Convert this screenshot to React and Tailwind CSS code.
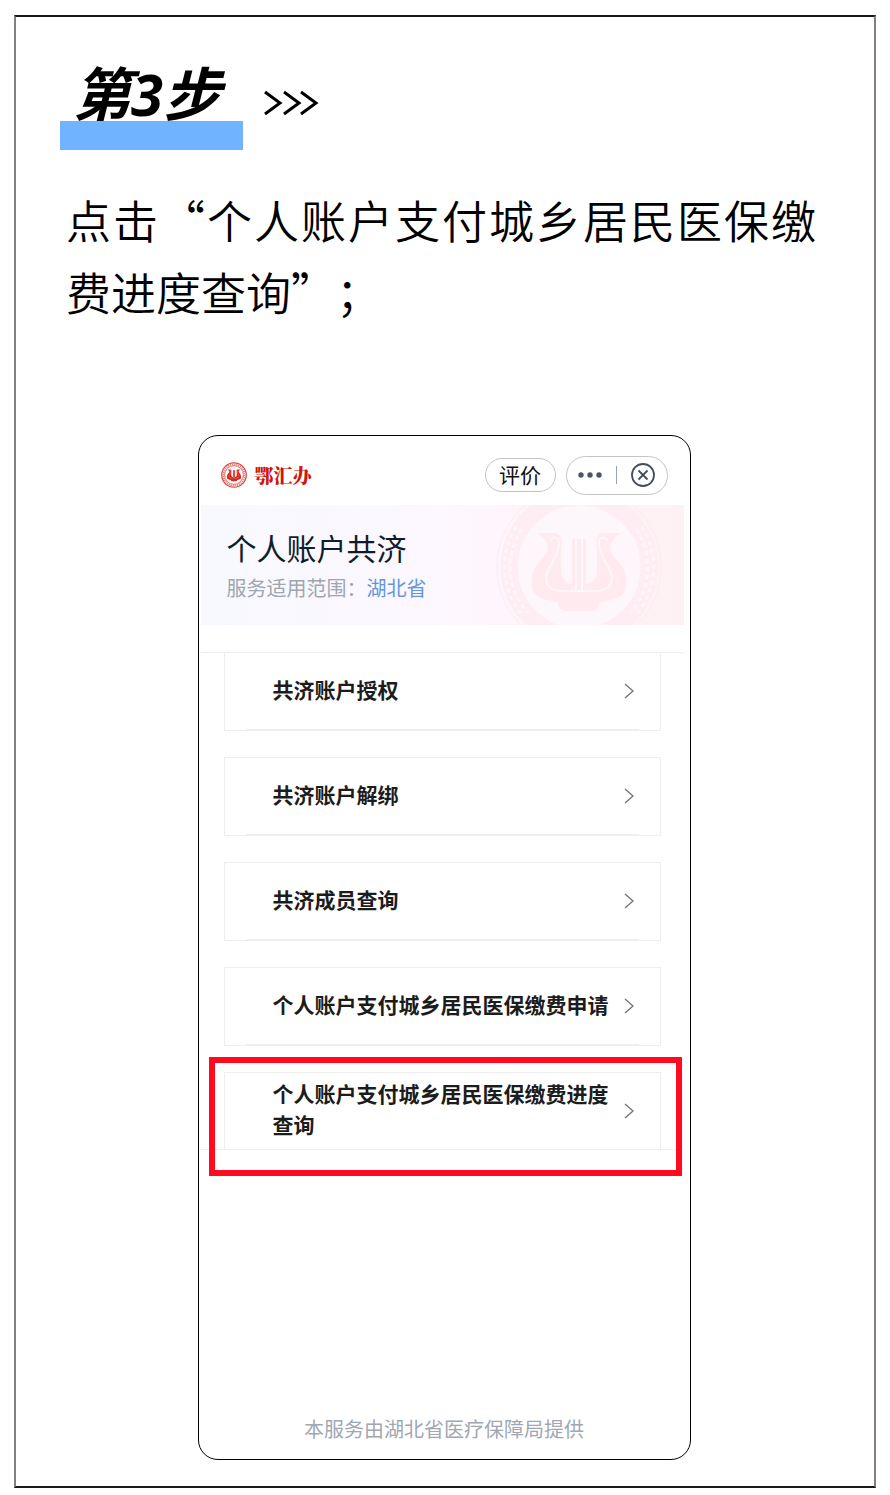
import React from "react";

const services = [
  { id: 1, name: "共济账户授权" },
  { id: 2, name: "共济账户解绑" },
  { id: 3, name: "共济成员查询" },
  { id: 4, name: "个人账户支付城乡居民医保缴费申请" },
  { id: 5, name: "个人账户支付城乡居民医保缴费进度查询", active: true },
];

// Lyre made of two birds facing outwards, drawn on a 100 x 100 box
const Lyre = ({ color, gap }) => (
  <>
    <path
      fill={color}
      d="M8 11 L27 11 C33 13 34 19 32 26 L32 50 C33 58 38 62 43 62 L43 17 L57 17 L57 62 C62 62 67 58 68 50 L68 26 C66 19 67 13 73 11 L92 11 C87 15 82 19 81 25 C81 36 96 40 97 56 C98 67 95 74 88 76 C82 79 76 78 71 81 C70 87 67 89 63 89 L37 89 C33 89 30 87 29 81 C24 78 18 79 12 76 C5 74 2 67 3 56 C4 40 19 36 19 25 C18 19 13 15 8 11 Z"
    />
    <path
      fill="none"
      stroke={gap}
      strokeWidth="2"
      d="M22 19 C22 14 30 14 30 21 C30 36 18 44 17 56 C17 66 26 69 34 69 L66 69 C74 69 83 66 83 56 C82 44 70 36 70 21 C70 14 78 14 78 19 M47 17 L47 69 M53 17 L53 69"
    />
  </>
);

const Logo = () => (
  <svg viewBox="0 0 100 100" className="size-[26px]" aria-hidden="true">
    <circle cx="50" cy="50" r="47" fill="none" stroke="#dc4a40" strokeWidth="5" />
    <circle cx="50" cy="50" r="41" fill="none" stroke="#e88a84" strokeWidth="7" strokeDasharray="5 3" />
    <circle cx="50" cy="50" r="36" fill="none" stroke="#dc4a40" strokeWidth="3" />
    <g transform="translate(21 22) scale(0.58)">
      <Lyre color="#d5271e" gap="#f2aaa5" />
    </g>
  </svg>
);

const Watermark = () => (
  <svg viewBox="0 0 166 120" className="absolute top-0 right-[22px] h-full" fill="none" aria-hidden="true">
    <circle cx="83" cy="62" r="82" stroke="#fdecf1" strokeWidth="1" />
    <circle cx="83" cy="62" r="62" fill="#fdf6fb" />
    <circle cx="83" cy="62" r="70" stroke="#feedf2" strokeWidth="17" />
    {/* Laurel leaves on both sides of the ring */}
    <path d="M26 24 A68 68 0 0 0 32 108 M140 24 A68 68 0 0 1 134 108" stroke="#fff6fa" strokeWidth="3" strokeDasharray="5 3" />
    <path d="M20 22 A74 74 0 0 0 26 110 M146 22 A74 74 0 0 1 140 110" stroke="#fff6fa" strokeWidth="3" strokeDasharray="4 4" />
    <g transform="translate(33 17)">
      <Lyre color="#ffebef" gap="#fdf6fb" />
    </g>
  </svg>
);

const Chevron = () => (
  <svg viewBox="0 0 10 16" className="h-4 w-[10px] shrink-0" fill="none" stroke="#777" strokeWidth="1.5" aria-hidden="true">
    <path d="M1 1 L9 8 L1 15" />
  </svg>
);

const Phone = () => (
  <section className="mx-auto w-full max-w-[493px] rounded-[20px] border border-black bg-white pt-5 pb-[15px]">
    <header className="flex h-[38px] items-center px-[22px]">
      <Logo />
      <span className="ml-2 flex-1 font-['Noto_Serif_CJK_SC','Noto_Sans_CJK_SC',serif] text-[19px] leading-6 font-black text-[#d0140f]">
        鄂汇办
      </span>
      <button className="h-[34px] w-[71px] rounded-full border border-[#c4c4c4] pb-[2px] text-[21px] leading-[30px] text-[#111]">
        评价
      </button>
      <div className="ml-[10px] flex h-[39px] w-[102px] items-center justify-between rounded-full border border-[#c4c4c4] pr-3 pl-[11px]">
        <button aria-label="更多">
          <svg viewBox="0 0 24 6" className="h-[6px] w-6" fill="#4b5566">
            <circle cx="3" cy="3" r="2.7" />
            <circle cx="12" cy="3" r="2.7" />
            <circle cx="21" cy="3" r="2.7" />
          </svg>
        </button>
        <span className="h-[18px] w-px bg-[#9aa5b1]" />
        <button aria-label="关闭">
          <svg viewBox="0 0 24 24" className="size-6" fill="none" stroke="#434d5e" strokeWidth="1.8">
            <circle cx="12" cy="12" r="11" />
            <path d="M7.5 7.5 L16.5 16.5 M16.5 7.5 L7.5 16.5" />
          </svg>
        </button>
      </div>
    </header>

    {/* Banner */}
    <div className="relative mt-[11px] mr-[6px] ml-[2px] h-[120px] overflow-hidden bg-linear-to-r from-[#f7f9ff] via-[#fdf7fe] to-[#fff1f3] pt-5 pl-[26px]">
      <Watermark />
      <h2 className="relative text-[30px] leading-[44px] text-[#101c2c]">个人账户共济</h2>
      <p className="relative text-[20px] leading-[38px] text-[#a0a5b0]">
        服务适用范围：
        <a href="#hubei" className="text-[#6496dc]">湖北省</a>
      </p>
    </div>

    {/* Service list */}
    <ul className="mt-[27px] mr-[6px] ml-[2px] flex flex-col gap-[26px] border-y border-[#f0f0f0] px-[23px]">
      {services.map((item) => (
        <li
          key={item.id}
          className="relative border border-[#eee] first:border-t-0 last:border-b-0"
        >
          <a
            href={`#service-${item.id}`}
            className="flex h-[76px] items-center justify-between pr-[26px] pl-12 text-[21px] leading-[31px] font-bold text-[#1c1c1c]"
          >
            <span className="w-[338px] pb-1">{item.name}</span>
            <Chevron />
          </a>
          {!item.active && <div className="mx-[21px] h-px bg-[#eee]" />}
          {item.active && (
            <div className="pointer-events-none absolute -top-4 -right-[22px] -bottom-[27px] -left-4 border-6 border-[#ff0a20]" />
          )}
        </li>
      ))}
    </ul>

    <p className="mt-[264px] text-center text-[20px] leading-[30px] text-[#a0a7b3]">
      本服务由湖北省医疗保障局提供
    </p>
  </section>
);

const App = () => {
  return (
    <div lang="zh-CN" className="bg-white px-[14px] pt-[15px] pb-2 font-['Noto_Sans_CJK_SC',sans-serif] text-black">
      <main className="border-2 border-x-[#808080] border-y-[#1a1a1a] pr-[46px] pb-[26px] pl-11">
        {/* Step heading */}
        <div className="flex items-start pt-[50px]">
          <h1 className="flex w-[183px] flex-col text-[58px] leading-[54px] font-bold italic">
            <span className="pl-[13px] font-['Open_Sans','Noto_Sans_CJK_SC',sans-serif]">第3步</span>
            <span className="h-[29px] w-full bg-[#70b3ff]" />
          </h1>
          <svg viewBox="0 0 56 26" className="mt-[23px] ml-5 h-[26px] w-14" fill="none" stroke="#000" strokeWidth="3" aria-hidden="true">
            <path d="M2 2 L17 13 L2 24 M21 2 L36 13 L21 24 M38 2 L53 13 L38 24" />
          </svg>
        </div>

        <p className="mt-[34px] mr-3 ml-[6px] text-justify text-[45px] leading-[72px] font-[350] [text-spacing-trim:space-all]">
          点击“个人账户支付城乡居民医保缴费进度查询”；
        </p>

        <div className="mt-[107px]">
          <Phone />
        </div>
      </main>
    </div>
  );
};

export default App;
